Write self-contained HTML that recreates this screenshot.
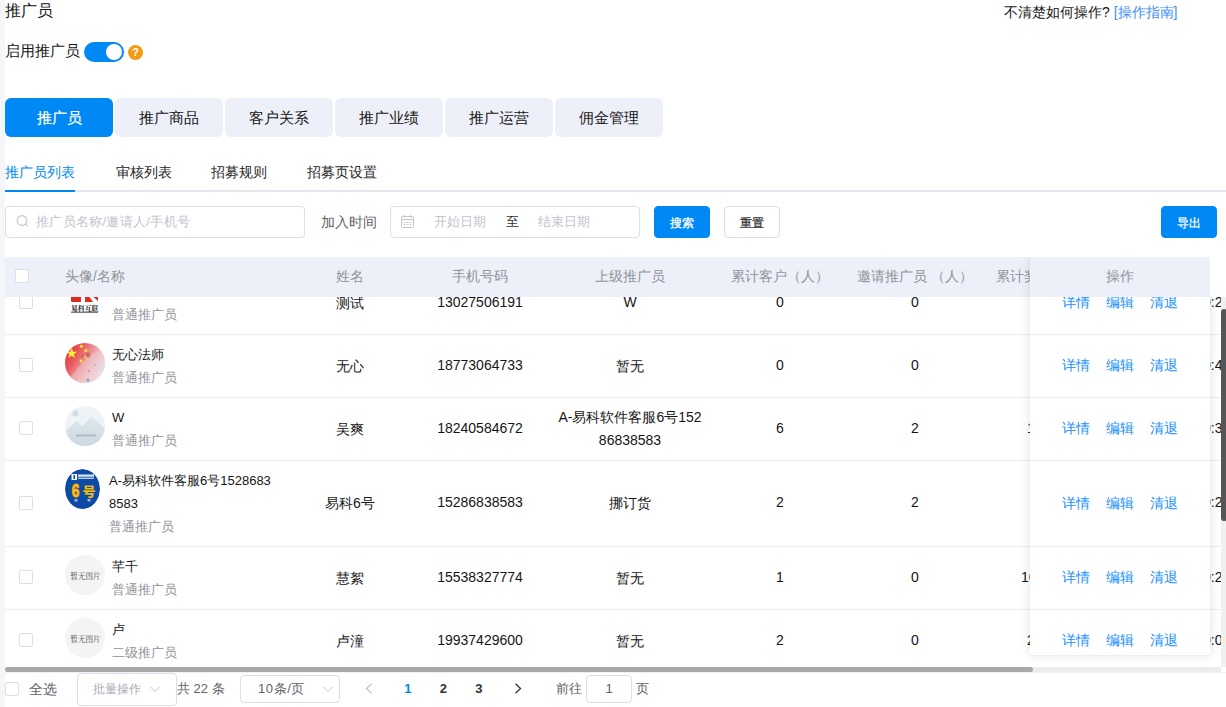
<!DOCTYPE html>
<html><head><meta charset="utf-8">
<style>
*{box-sizing:border-box;margin:0;padding:0}
html,body{width:1226px;height:707px;overflow:hidden;background:#fff}
body{position:relative;font-family:"Liberation Sans",sans-serif;font-size:14px;color:#151515}
.a{position:absolute;white-space:nowrap}
.strip{left:0;top:0;width:5px;height:707px;background:#f5f6fa}
.title{left:5px;top:0;font-size:16px;line-height:22px;color:#151515}
.help{left:1004px;top:2px;line-height:20px;color:#151515}
.help span{color:#3b8ff7}
.en{left:5px;top:40px;font-size:15px;line-height:22px;color:#151515}
.sw{left:84px;top:42px;width:40px;height:20px;border-radius:10px;background:#0089f5}
.sw i{position:absolute;left:22px;top:2px;width:16px;height:16px;border-radius:50%;background:#fff}
.q{left:128px;top:45px;width:15px;height:15px;border-radius:50%;background:#f39c12;color:#fff;font-size:11px;line-height:15px;text-align:center;font-weight:bold}
.tab{top:98px;width:108px;height:39px;border-radius:6px;background:#eef0f9;font-size:15px;line-height:39px;text-align:center;color:#151515}
.tab.on{background:#0089f5;color:#fff;-webkit-text-stroke:0.2px #fff}
.st{top:162px;line-height:20px;color:#1f1f1f}
.st.on{color:#0089f5}
.tline{left:5px;top:190px;width:1221px;height:2px;background:#e4e7ed}
.tbar{left:5px;top:190px;width:70px;height:2px;background:#0089f5}
.inp{border:1px solid #dcdfe6;border-radius:4px;background:#fff}
.ph{color:#c0c4cc}
.btn{top:206px;width:56px;height:32px;border-radius:4px;font-size:12px;line-height:30px;text-align:center;padding-top:1px;-webkit-text-stroke:0.25px currentColor}

.hd{left:5px;top:257px;width:1205px;height:40px;background:#edf0f9}
.ht{top:256px;line-height:40px;color:#909399;text-align:center}
.cb{width:14px;height:14px;border:1px solid #dcdfe6;border-radius:2px;background:#fff}
.body{left:5px;top:297px;width:1216px;height:370px;overflow:hidden}
.row{position:absolute;left:0;width:1216px;border-bottom:1px solid #ebeef5}
.c{position:absolute;top:0;height:100%;display:flex;align-items:center;justify-content:center;text-align:center;line-height:23px;white-space:nowrap}
.nm{position:absolute;top:8px;line-height:23px;white-space:nowrap;font-size:13px}
.nm .s{color:#909399}
.av{position:absolute;left:60px;top:8px;width:40px;height:40px;border-radius:50%;overflow:hidden}
.fx{left:1030px;top:257px;width:180px;height:398px;background:#fff;box-shadow:0 0 10px rgba(0,0,0,.12);clip-path:inset(0 -14px -14px -14px)}
.fxh{position:absolute;left:0;top:0;width:180px;height:40px;background:#edf0f9;color:#909399;line-height:38px;text-align:center}
.fxb{position:absolute;left:0;top:40px;width:180px;height:358px;overflow:hidden}
.fr{position:absolute;left:0;width:180px;border-bottom:1px solid #ebeef5}
.lk{position:absolute;top:0;height:100%;display:flex;align-items:center;color:#1890ff}
.hs{left:5px;top:667px;width:1216px;height:5px;background:#ececec}
.hs i{position:absolute;left:0;top:0;width:1028px;height:5px;border-radius:3px;background:#a8a8a8}
.vs{left:1221px;top:297px;width:5px;height:370px;background:#f0f0f0}
.vs i{position:absolute;left:0;top:12px;width:6px;height:212px;border-radius:3px;background:#565656}

.ft{font-size:13px;color:#606266}
.sel{border:1px solid #dcdfe6;border-radius:4px;background:#fff}
.chev{position:absolute}
.pg{top:675px;width:35.5px;line-height:28px;text-align:center;font-size:13px;font-weight:bold;color:#303133}
.patch{left:1210px;top:257px;width:16px;height:40px;background:#fff}
</style></head><body>
<div class="a strip"></div>
<div class="a title">推广员</div>
<div class="a help">不清楚如何操作? <span>[操作指南]</span></div>
<div class="a en">启用推广员</div>
<div class="a sw"><i></i></div>
<div class="a q">?</div>

<div class="a tab on" style="left:5px">推广员</div>
<div class="a tab" style="left:115px">推广商品</div>
<div class="a tab" style="left:225px">客户关系</div>
<div class="a tab" style="left:335px">推广业绩</div>
<div class="a tab" style="left:445px">推广运营</div>
<div class="a tab" style="left:555px">佣金管理</div>

<div class="a st on" style="left:5px">推广员列表</div>
<div class="a st" style="left:116px">审核列表</div>
<div class="a st" style="left:211px">招募规则</div>
<div class="a st" style="left:307px">招募页设置</div>
<div class="a tline"></div>
<div class="a tbar"></div>

<div class="a inp" style="left:5px;top:206px;width:300px;height:32px"></div>
<svg class="a" style="left:16px;top:215px" width="13" height="13" viewBox="0 0 13 13"><circle cx="6" cy="5.5" r="4.9" fill="none" stroke="#c0c4cc" stroke-width="1.1"/><path d="M9.6 9.2l2 2" stroke="#c0c4cc" stroke-width="1.1"/></svg>
<div class="a ph" style="left:36px;top:212px;line-height:20px;font-size:13px;letter-spacing:0.3px">推广员名称/邀请人/手机号</div>
<div class="a" style="left:321px;top:212px;line-height:20px;color:#606266">加入时间</div>
<div class="a inp" style="left:390px;top:206px;width:250px;height:32px"></div>
<svg class="a" style="left:401px;top:215px" width="13" height="13" viewBox="0 0 13 13"><rect x="0.5" y="1.5" width="12" height="11" rx="1" fill="none" stroke="#c0c4cc" stroke-width="1"/><path d="M0.5 4.5h12" stroke="#c0c4cc" stroke-width="1"/><path d="M3.5 0v2.5M9.5 0v2.5" stroke="#c0c4cc" stroke-width="1"/><path d="M2.5 7.5h2M5.5 7.5h2M8.5 7.5h2M2.5 9.5h2M5.5 9.5h2M8.5 9.5h2" stroke="#c9ccd3" stroke-width="1"/></svg>
<div class="a ph" style="left:434px;top:212px;line-height:20px;font-size:13px">开始日期</div>
<div class="a" style="left:506px;top:212px;line-height:20px;color:#303133;font-size:13px">至</div>
<div class="a ph" style="left:538px;top:212px;line-height:20px;font-size:13px">结束日期</div>
<div class="a btn" style="left:654px;background:#0089f5;color:#fff;border:1px solid #0089f5">搜索</div>
<div class="a btn" style="left:724px;background:#fff;color:#303133;border:1px solid #dcdfe6">重置</div>
<div class="a btn" style="left:1161px;background:#0089f5;color:#fff;border:1px solid #0089f5">导出</div>

<div class="a hd"></div>
<div class="a cb" style="left:15px;top:269px"></div>
<div class="a ht" style="left:65px">头像/名称</div>
<div class="a ht" style="left:290px;width:120px">姓名</div>
<div class="a ht" style="left:410px;width:140px">手机号码</div>
<div class="a ht" style="left:550px;width:160px">上级推广员</div>
<div class="a ht" style="left:710px;width:140px">累计客户（人）</div>
<div class="a ht" style="left:850px;width:130px">邀请推广员 （人）</div>
<div class="a ht" style="left:996px">累计奖励佣金（元）</div>
<div class="a body">
<div class="row" style="top:-25px;height:63px">
<div class="cb" style="position:absolute;left:14px;top:23px"></div>
<div class="av" style=""><svg width="40" height="40" viewBox="0 0 40 40"><rect x="0" y="0" width="40" height="40" fill="#fff"/><path d="M6 8h10v14h-8.5a1.5 1.5 0 0 1-1.5-1.5z" fill="#e0291f"/><polygon points="20,8 18.2,8 20,12 21,12 28,22 20,22" fill="#e0291f"/><polygon points="26,8 33,8 33,21 28.5,17" fill="#e0291f"/><text x="6" y="30.5" font-size="6.6" fill="#1a1a1a" font-family="Noto Serif CJK SC,serif" font-weight="bold" textLength="27.5" lengthAdjust="spacingAndGlyphs">易科互联</text><rect x="6" y="31.6" width="27" height="1.3" fill="#444" opacity=".75"/></svg></div>
<div class="nm" style="left:107px"><div style="height:23px"></div><div class="s">普通推广员</div></div>
<div class="c" style="left:285px;width:120px">测试</div>
<div class="c" style="left:405px;width:140px;top:-1px">13027506191</div>
<div class="c" style="left:545px;width:160px;top:-1px"><div>W</div></div>
<div class="c" style="left:705px;width:140px;top:-1px">0</div>
<div class="c" style="left:845px;width:130px;top:-1px">0</div>
<div class="c" style="left:1198px;justify-content:flex-start;top:-1px">0:25</div>
</div>
<div class="row" style="top:38px;height:63px">
<div class="cb" style="position:absolute;left:14px;top:23px"></div>
<div class="av" style=""><svg width="40" height="40" viewBox="0 0 40 40"><defs><linearGradient id="fl" x1="0" y1="0" x2="1" y2="0.6"><stop offset="0" stop-color="#e8282d"/><stop offset="0.35" stop-color="#e65a5c"/><stop offset="0.7" stop-color="#eeb2b6"/><stop offset="1" stop-color="#e9e6ee"/></linearGradient></defs><rect width="40" height="40" fill="url(#fl)"/><path d="M24 12l16-6v34h-40z" fill="#f2d0d4" opacity=".45"/><polygon points="6.7,4.8 8.1,8.7 12.2,8.7 8.9,11.2 10.1,15.1 6.7,12.7 3.3,15.1 4.5,11.2 1.2,8.7 5.3,8.7" fill="#f5f03a"/><circle cx="16.3" cy="3.3" r="1.6" fill="#f0e03a"/><circle cx="20.8" cy="7.4" r="1.6" fill="#efdc3a"/><circle cx="20.2" cy="13.6" r="1.6" fill="#efe04a"/><circle cx="16.2" cy="18" r="1.6" fill="#f0e04a"/><circle cx="23" cy="12" r="2.5" fill="#b83838" opacity=".5"/><circle cx="18" cy="13" r="2" fill="#c04040" opacity=".4"/><circle cx="24" cy="28" r="1" fill="#a06070" opacity=".5"/><circle cx="30" cy="22" r="1" fill="#8aa0c8" opacity=".6"/><circle cx="23" cy="37" r="1.5" fill="#6a8ac8" opacity=".7"/><circle cx="35" cy="24" r="2" fill="#c8d8e8" opacity=".6"/></svg></div>
<div class="nm" style="left:107px"><div>无心法师</div><div class="s">普通推广员</div></div>
<div class="c" style="left:285px;width:120px">无心</div>
<div class="c" style="left:405px;width:140px;top:-1px">18773064733</div>
<div class="c" style="left:545px;width:160px"><div>暂无</div></div>
<div class="c" style="left:705px;width:140px;top:-1px">0</div>
<div class="c" style="left:845px;width:130px;top:-1px">0</div>
<div class="c" style="left:1198px;justify-content:flex-start;top:-1px">0:45</div>
</div>
<div class="row" style="top:101px;height:63px">
<div class="cb" style="position:absolute;left:14px;top:23px"></div>
<div class="av" style=""><svg width="40" height="40" viewBox="0 0 40 40"><defs><linearGradient id="mt" x1="0" y1="0" x2="0" y2="1"><stop offset="0" stop-color="#dfe7ed"/><stop offset="1" stop-color="#cbd8e1"/></linearGradient></defs><rect width="40" height="40" fill="#eef3f6"/><circle cx="10.5" cy="7.5" r="3" fill="#d4dde6"/><path d="M0 25l12-10 5.5 5.5 8.5-10 14 12v18h-40z" fill="url(#mt)"/><rect x="11" y="28.5" width="20" height="2" fill="#8fa3b5" opacity=".55"/></svg></div>
<div class="nm" style="left:107px"><div>W</div><div class="s">普通推广员</div></div>
<div class="c" style="left:285px;width:120px">吴爽</div>
<div class="c" style="left:405px;width:140px;top:-1px">18240584672</div>
<div class="c" style="left:545px;width:160px"><div>A-易科软件客服6号152<br>86838583</div></div>
<div class="c" style="left:705px;width:140px;top:-1px">6</div>
<div class="c" style="left:845px;width:130px;top:-1px">2</div>
<div class="c" style="left:1022px;justify-content:flex-start;top:-1px">1</div>
<div class="c" style="left:1198px;justify-content:flex-start;top:-1px">0:35</div>
</div>
<div class="row" style="top:164px;height:86px">
<div class="cb" style="position:absolute;left:14px;top:35px"></div>
<div class="av" style="width:35px;"><svg width="35" height="40" viewBox="0 0 35 40"><defs><linearGradient id="og" x1="0" y1="0" x2="1" y2="1"><stop offset="0" stop-color="#ff8a00"/><stop offset=".5" stop-color="#ffd200"/><stop offset="1" stop-color="#ff9a00"/></linearGradient></defs><ellipse cx="17.5" cy="20" rx="17.5" ry="20" fill="#0c4aa6"/><rect x="6.5" y="5" width="5.5" height="6" fill="#f4f6fa"/><rect x="8.5" y="6" width="1.5" height="4" fill="#0c4aa6"/><rect x="13" y="5.5" width="16" height="2.2" fill="#dfe6f2"/><rect x="13" y="8.5" width="16" height="1.5" fill="#b9c8e2"/><text transform="translate(10.5,27.5) scale(0.72,1)" x="0" y="0" font-size="19" font-weight="bold" fill="url(#og)" stroke="#ffb400" stroke-width="1.1" text-anchor="middle" font-family="Liberation Sans,sans-serif">6</text><text x="24" y="26.5" font-size="13" font-weight="bold" fill="#f9c000" stroke="#f9c000" stroke-width="0.2" text-anchor="middle" font-family="Noto Sans CJK SC,sans-serif">号</text><rect x="9.5" y="30" width="3" height="2.5" fill="#9fb4d8"/><rect x="22.5" y="30" width="3" height="2.5" fill="#9fb4d8"/></svg></div>
<div class="nm" style="left:104px"><div>A-易科软件客服6号1528683</div><div>8583</div><div class="s">普通推广员</div></div>
<div class="c" style="left:285px;width:120px">易科6号</div>
<div class="c" style="left:405px;width:140px;top:-1px">15286838583</div>
<div class="c" style="left:545px;width:160px"><div>挪订货</div></div>
<div class="c" style="left:705px;width:140px;top:-1px">2</div>
<div class="c" style="left:845px;width:130px;top:-1px">2</div>
<div class="c" style="left:1198px;justify-content:flex-start;top:-1px">0:25</div>
</div>
<div class="row" style="top:250px;height:63px">
<div class="cb" style="position:absolute;left:14px;top:23px"></div>
<div class="av" style=""><svg width="40" height="40" viewBox="0 0 40 40"><rect width="40" height="40" fill="#f4f4f4"/><text x="20.5" y="23.5" font-size="7.6" text-anchor="middle" fill="#444" font-family="Noto Serif CJK SC,serif">暂无图片</text></svg></div>
<div class="nm" style="left:107px"><div>芊千</div><div class="s">普通推广员</div></div>
<div class="c" style="left:285px;width:120px">慧絮</div>
<div class="c" style="left:405px;width:140px;top:-1px">15538327774</div>
<div class="c" style="left:545px;width:160px"><div>暂无</div></div>
<div class="c" style="left:705px;width:140px;top:-1px">1</div>
<div class="c" style="left:845px;width:130px;top:-1px">0</div>
<div class="c" style="left:1016px;justify-content:flex-start;top:-1px">16</div>
<div class="c" style="left:1198px;justify-content:flex-start;top:-1px">0:25</div>
</div>
<div class="row" style="top:313px;height:63px">
<div class="cb" style="position:absolute;left:14px;top:23px"></div>
<div class="av" style=""><svg width="40" height="40" viewBox="0 0 40 40"><rect width="40" height="40" fill="#f4f4f4"/><text x="20.5" y="23.5" font-size="7.6" text-anchor="middle" fill="#444" font-family="Noto Serif CJK SC,serif">暂无图片</text></svg></div>
<div class="nm" style="left:107px"><div>卢</div><div class="s">二级推广员</div></div>
<div class="c" style="left:285px;width:120px">卢潼</div>
<div class="c" style="left:405px;width:140px;top:-1px">19937429600</div>
<div class="c" style="left:545px;width:160px"><div>暂无</div></div>
<div class="c" style="left:705px;width:140px;top:-1px">2</div>
<div class="c" style="left:845px;width:130px;top:-1px">0</div>
<div class="c" style="left:1022px;justify-content:flex-start;top:-1px">2</div>
<div class="c" style="left:1198px;justify-content:flex-start;top:-1px">0:05</div>
</div>
</div>
<div class="a fx"><div class="fxh">操作</div><div class="fxb">
<div class="fr" style="top:-25px;height:63px"><div class="lk" style="left:32px">详情</div><div class="lk" style="left:76px">编辑</div><div class="lk" style="left:120px">清退</div></div>
<div class="fr" style="top:38px;height:63px"><div class="lk" style="left:32px">详情</div><div class="lk" style="left:76px">编辑</div><div class="lk" style="left:120px">清退</div></div>
<div class="fr" style="top:101px;height:63px"><div class="lk" style="left:32px">详情</div><div class="lk" style="left:76px">编辑</div><div class="lk" style="left:120px">清退</div></div>
<div class="fr" style="top:164px;height:86px"><div class="lk" style="left:32px">详情</div><div class="lk" style="left:76px">编辑</div><div class="lk" style="left:120px">清退</div></div>
<div class="fr" style="top:250px;height:63px"><div class="lk" style="left:32px">详情</div><div class="lk" style="left:76px">编辑</div><div class="lk" style="left:120px">清退</div></div>
<div class="fr" style="top:313px;height:63px"><div class="lk" style="left:32px">详情</div><div class="lk" style="left:76px">编辑</div><div class="lk" style="left:120px">清退</div></div>
</div></div>
<div class="a vs"><i></i></div>
<div class="a hs"><i></i></div>

<div class="a patch"></div>
<div class="a" style="left:1030px;top:655px;width:180px;height:1px;background:#ebeef5"></div>
<div class="a" style="left:5px;top:672px;width:1221px;height:1px;background:#f0f2f7"></div>
<div class="a cb" style="left:5px;top:682px"></div>
<div class="a" style="left:29px;top:679px;line-height:20px;color:#606266">全选</div>
<div class="a sel" style="left:77px;top:673px;width:100px;height:33px"></div>
<div class="a ph" style="left:93px;top:679px;line-height:20px;font-size:12px;color:#a8abb2">批量操作</div>
<svg class="a" style="left:150px;top:686px" width="10" height="7" viewBox="0 0 10 7"><path d="M0.5 1l4.5 4.5 4.5-4.5" fill="none" stroke="#c0c4cc" stroke-width="1"/></svg>
<div class="a ft" style="left:177px;top:679px;line-height:20px">共 22 条</div>
<div class="a sel" style="left:240px;top:675px;width:100px;height:28px"></div>
<div class="a ft" style="left:258px;top:679px;line-height:20px;letter-spacing:.6px">10条/页</div>
<svg class="a" style="left:323px;top:686px" width="10" height="7" viewBox="0 0 10 7"><path d="M0.5 1l4.5 4.5 4.5-4.5" fill="none" stroke="#c0c4cc" stroke-width="1"/></svg>
<svg class="a" style="left:365px;top:683px" width="8" height="11" viewBox="0 0 8 11"><path d="M6.5 0.8l-5 4.7 5 4.7" fill="none" stroke="#c0c4cc" stroke-width="1.3"/></svg>
<div class="a pg" style="left:390px;color:#0089f5">1</div>
<div class="a pg" style="left:425.5px">2</div>
<div class="a pg" style="left:461px">3</div>
<svg class="a" style="left:514px;top:683px" width="8" height="11" viewBox="0 0 8 11"><path d="M1.5 0.8l5 4.7-5 4.7" fill="none" stroke="#303133" stroke-width="1.3"/></svg>
<div class="a ft" style="left:556px;top:679px;line-height:20px">前往</div>
<div class="a sel" style="left:586px;top:675px;width:46px;height:28px;text-align:center;line-height:26px;font-size:13px;color:#606266">1</div>
<div class="a ft" style="left:636px;top:679px;line-height:20px">页</div>
</body></html>
